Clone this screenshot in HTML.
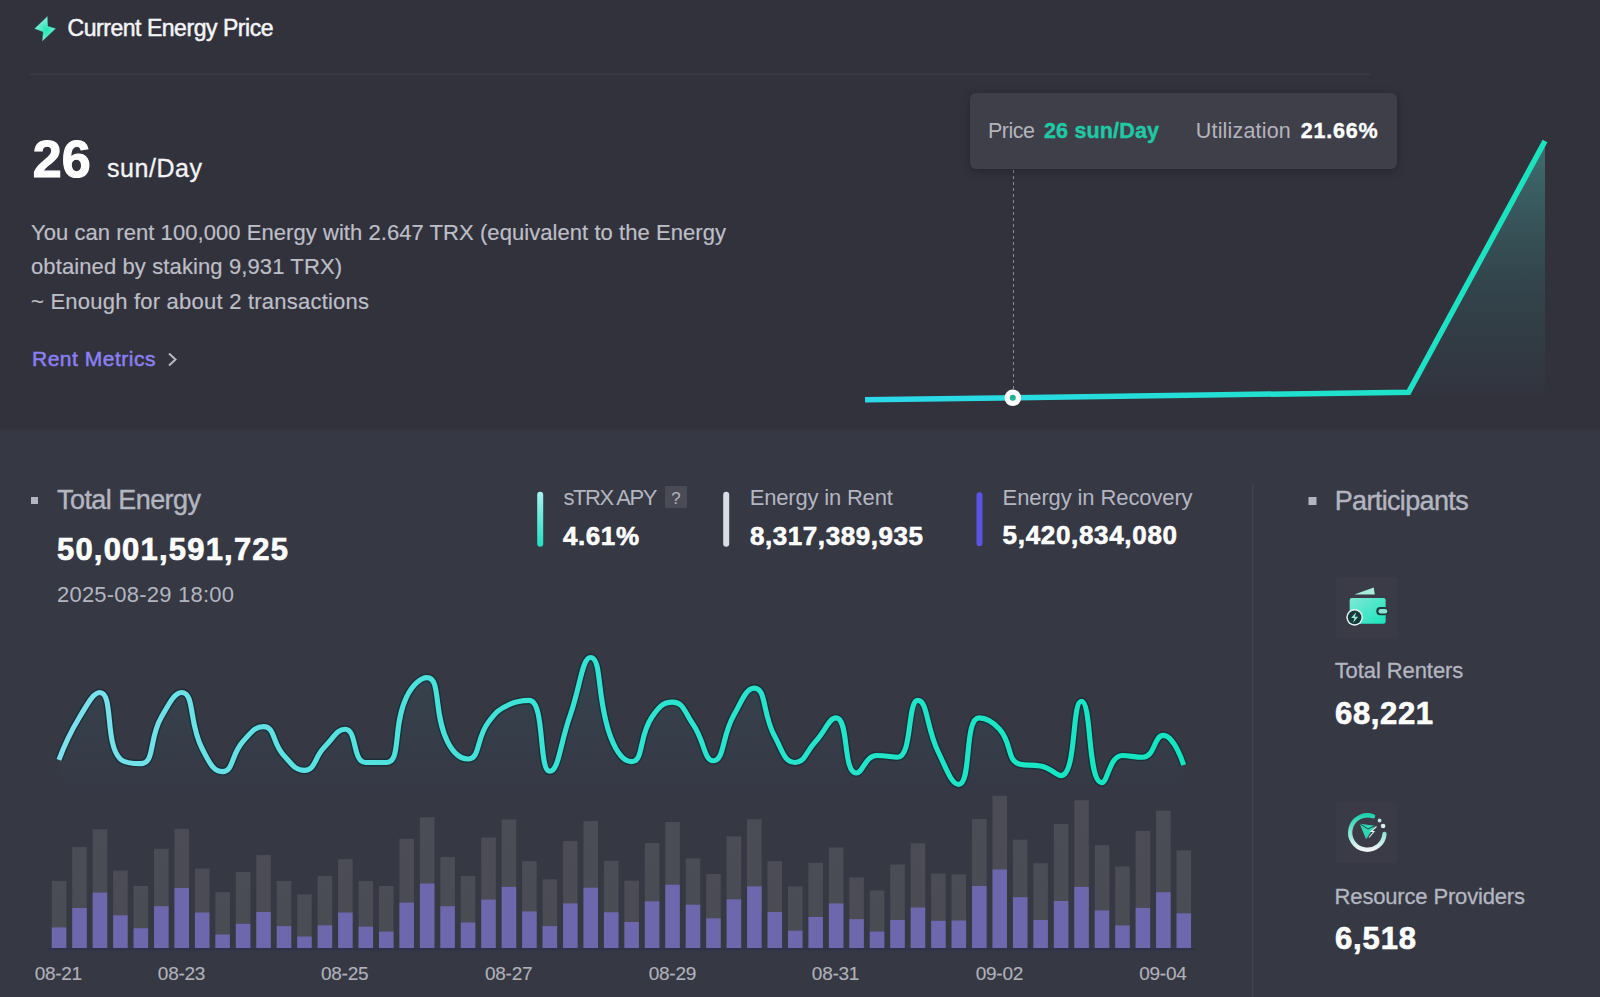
<!DOCTYPE html>
<html><head><meta charset="utf-8">
<style>
html,body{margin:0;padding:0;}
body{width:1600px;height:997px;overflow:hidden;position:relative;background:#363844;font-family:"Liberation Sans",sans-serif;}
.t{position:absolute;white-space:nowrap;}
svg{position:absolute;left:0;top:0;}
</style></head><body>
<div style="position:absolute;left:0;top:0;width:1600px;height:433px;background:linear-gradient(to bottom,#32323d 0px,#32323d 428px,#363844 432px);"></div>
<svg width="1600" height="997" viewBox="0 0 1600 997">
<defs>
<linearGradient id="gg" x1="0" y1="0" x2="0" y2="1"><stop offset="0" stop-color="#4b4c55"/><stop offset="1" stop-color="#4a4b53"/></linearGradient>
<linearGradient id="lg" x1="0" y1="0" x2="1" y2="0"><stop offset="0" stop-color="#7ee0ee"/><stop offset="0.5" stop-color="#2fe3d2"/><stop offset="1" stop-color="#12e6c0"/></linearGradient>
<linearGradient id="ag" x1="0" y1="0" x2="0" y2="1"><stop offset="0" stop-color="#2de0c8" stop-opacity="0.07"/><stop offset="1" stop-color="#2de0c8" stop-opacity="0"/></linearGradient>
<linearGradient id="plg" x1="865" y1="0" x2="1545" y2="0" gradientUnits="userSpaceOnUse"><stop offset="0" stop-color="#2cd9ea"/><stop offset="1" stop-color="#1ae4bf"/></linearGradient>
<linearGradient id="pag" x1="0" y1="142" x2="0" y2="395" gradientUnits="userSpaceOnUse"><stop offset="0" stop-color="#50b8b0" stop-opacity="0.45"/><stop offset="0.55" stop-color="#3a9890" stop-opacity="0.18"/><stop offset="1" stop-color="#2a9080" stop-opacity="0.02"/></linearGradient>
<linearGradient id="bar1" x1="0" y1="0" x2="0" y2="1"><stop offset="0" stop-color="#a6f3f3"/><stop offset="1" stop-color="#1fe0c0"/></linearGradient>
</defs>
<!-- header divider -->
<rect x="30" y="73.5" width="1340" height="1.5" fill="#3b3b47"/>
<!-- header icon -->
<defs><radialGradient id="bg1" cx="0.55" cy="0.55" r="0.6"><stop offset="0" stop-color="#1fe8b6"/><stop offset="1" stop-color="#9ceee0"/></radialGradient></defs><polygon points="47.6,16.1 34.3,28.7 42.9,31.9 42.1,41.6 56,28.5 48,26" fill="url(#bg1)" stroke="#0d3b38" stroke-width="0.6" stroke-opacity="0.6" stroke-linejoin="round"/>
<!-- chevron -->
<polyline points="169,353.5 175.5,359.5 169,365.5" fill="none" stroke="#b7b8c0" stroke-width="2"/>
<!-- price chart -->
<path d="M865,399.8 L1408.6,392.2 L1545,141 L1545,395 L865,400 Z" fill="url(#pag)"/>
<line x1="1013.5" y1="170" x2="1013.5" y2="397" stroke="#8a8a92" stroke-width="1" stroke-dasharray="3,3"/>
<polyline points="865,399.8 1408.6,392.2 1545,141" fill="none" stroke="url(#plg)" stroke-width="5.5" stroke-linejoin="miter"/>
<circle cx="1012.8" cy="397.8" r="8.3" fill="#ffffff"/>
<circle cx="1012.8" cy="397.8" r="3" fill="#1bb58e"/>
<!-- tooltip -->

<!-- bottom -->
<rect x="31" y="497" width="7" height="7" fill="#b3b6c0"/>
<rect x="1308.5" y="497" width="8" height="8" fill="#b3b6c0"/>
<rect x="537.2" y="491.8" width="6" height="55" rx="3" fill="url(#bar1)"/>
<rect x="723.2" y="491.8" width="6" height="55" rx="3" fill="#dcdce6"/>
<rect x="976.5" y="492.3" width="6" height="54" rx="3" fill="#5b52e8"/>
<rect x="665" y="486" width="22" height="22" rx="1" fill="#4a4b55"/>
<text x="676" y="504" font-family="Liberation Sans" font-size="17" fill="#b3b6c0" text-anchor="middle">?</text>
<rect x="1252" y="484" width="1.5" height="513" fill="#41434f"/>
<rect x="1336" y="577" width="62" height="61" rx="4" fill="#3a3b46"/>
<rect x="1335.7" y="802" width="62" height="61" rx="4" fill="#3a3b46"/>
<!-- wallet icon -->
<defs>
<linearGradient id="wg" x1="0" y1="0" x2="1" y2="1"><stop offset="0" stop-color="#7fe9d6"/><stop offset="1" stop-color="#19e3bb"/></linearGradient>
<linearGradient id="rg" x1="0" y1="0" x2="0" y2="1"><stop offset="0" stop-color="#1fd3b0"/><stop offset="1" stop-color="#f0f4f6"/></linearGradient>
</defs>
<g transform="translate(1367.5,607) scale(1.1) translate(-1367.5,-607)"><polygon points="1355.5,595.6 1373.2,589.2 1374.1,595.6" fill="#a6ecd8"/>
<rect x="1351.3" y="598.8" width="32.7" height="23.4" rx="2" fill="url(#wg)"/>
<rect x="1375.5" y="607" width="11" height="7.5" rx="3.7" fill="#1b3b3e"/>
<rect x="1377.5" y="608.8" width="8" height="4" rx="2" fill="#86e4d0"/>
<circle cx="1355.8" cy="616.4" r="7.6" fill="#e8f2f2"/>
<circle cx="1355.8" cy="616.4" r="6.2" fill="#153a3a"/>
<polygon points="1357.3,611.5 1352.6,617 1355.6,617 1354.4,621.3 1359,615.8 1356,615.8" fill="#9ee8d8"/></g>
<!-- providers icon -->
<path d="M1373.1,816.3 A17.2,17.2 0 1 0 1384.5,834" fill="none" stroke="url(#rg)" stroke-width="4.3" stroke-linecap="round"/>
<circle cx="1379.6" cy="820.5" r="1.9" fill="#b8e8e0"/>
<circle cx="1383.1" cy="826" r="2.3" fill="#d8f0ee"/>
<polygon points="1359.7,823.7 1375,825.7 1366.1,839.2" fill="#2fd6b4"/>
<polyline points="1359.7,823.7 1368,829 1375,825.7 M1368,829 1366.1,839.2" fill="none" stroke="#1a4a46" stroke-width="1"/>
<polyline points="1376.5,826.5 1371,831.5 1374,831.5 1369,837.5" fill="none" stroke="#dff4f0" stroke-width="1.1"/>
<!-- line chart -->
<path d="M58.90,759.90 C58.90,759.90 67.22,737.49 79.35,717.50 C87.67,703.79 93.32,692.50 99.80,692.50 C113.77,692.50 104.53,743.73 120.25,759.00 C124.98,763.60 134.70,763.60 140.70,763.60 C155.15,763.60 148.68,739.17 161.15,717.50 C169.13,703.62 174.41,692.50 181.60,692.50 C194.86,692.50 188.57,722.44 202.05,748.50 C209.02,761.99 213.12,771.60 222.50,771.60 C233.57,771.60 230.89,754.77 242.95,741.50 C251.34,732.27 254.88,726.60 263.40,726.60 C275.33,726.60 271.92,742.73 283.85,755.50 C292.37,764.63 295.15,770.40 304.30,770.40 C315.60,770.40 313.77,757.84 324.75,746.80 C334.22,737.29 336.85,729.30 345.20,729.30 C357.30,729.30 352.24,762.50 365.65,762.50 C372.69,762.50 381.40,762.50 386.10,762.50 C401.85,762.50 392.05,727.09 406.55,697.00 C412.50,684.64 420.95,677.60 427.00,677.60 C441.40,677.60 432.86,712.45 447.45,741.50 C453.31,753.15 459.91,759.00 467.90,759.00 C480.36,759.00 475.89,738.82 488.35,722.30 C496.34,711.72 497.29,710.46 508.80,704.80 C517.74,700.40 524.73,700.40 529.25,700.40 C545.18,700.40 538.39,771.30 549.70,771.30 C558.84,771.30 560.07,743.35 570.15,715.30 C580.52,686.45 581.92,657.50 590.60,657.50 C602.37,657.50 596.19,700.17 611.05,738.00 C616.64,752.22 623.55,761.60 631.50,761.60 C644.00,761.60 638.46,736.63 651.95,717.00 C658.91,706.88 663.04,702.10 672.40,702.10 C683.49,702.10 684.35,711.80 692.85,724.00 C704.80,741.15 703.94,760.80 713.30,760.80 C724.39,760.80 721.59,736.91 733.75,715.30 C742.04,700.56 746.14,688.10 754.20,688.10 C766.59,688.10 762.14,713.54 774.65,736.30 C782.59,750.74 784.23,762.50 795.10,762.50 C804.68,762.50 805.65,752.30 815.55,741.50 C826.10,730.00 828.90,717.90 836.00,717.90 C849.35,717.90 842.42,773.00 856.45,773.00 C862.87,773.00 865.30,755.50 876.90,755.50 C885.75,755.50 892.17,757.30 897.35,757.30 C912.62,757.30 907.14,700.40 917.80,700.40 C927.59,700.40 926.15,727.15 938.25,752.00 C946.60,769.15 951.44,784.40 958.70,784.40 C971.89,784.40 963.85,717.90 979.15,717.90 C984.30,717.90 992.11,720.81 999.60,729.30 C1012.56,744.01 1006.47,760.94 1020.05,764.30 C1026.92,766.00 1030.77,764.30 1040.50,766.00 C1051.22,767.87 1056.31,775.60 1060.95,775.60 C1076.76,775.60 1071.61,701.30 1081.40,701.30 C1092.06,701.30 1087.29,782.60 1101.85,782.60 C1107.74,782.60 1109.56,755.50 1122.30,755.50 C1130.01,755.50 1134.44,757.30 1142.75,757.30 C1154.89,757.30 1153.91,735.40 1163.20,735.40 C1174.36,735.40 1183.65,765.00 1183.65,765.00 L1183.65,800 L58.90,800 Z" fill="url(#ag)"/>
<path d="M58.90,759.90 C58.90,759.90 67.22,737.49 79.35,717.50 C87.67,703.79 93.32,692.50 99.80,692.50 C113.77,692.50 104.53,743.73 120.25,759.00 C124.98,763.60 134.70,763.60 140.70,763.60 C155.15,763.60 148.68,739.17 161.15,717.50 C169.13,703.62 174.41,692.50 181.60,692.50 C194.86,692.50 188.57,722.44 202.05,748.50 C209.02,761.99 213.12,771.60 222.50,771.60 C233.57,771.60 230.89,754.77 242.95,741.50 C251.34,732.27 254.88,726.60 263.40,726.60 C275.33,726.60 271.92,742.73 283.85,755.50 C292.37,764.63 295.15,770.40 304.30,770.40 C315.60,770.40 313.77,757.84 324.75,746.80 C334.22,737.29 336.85,729.30 345.20,729.30 C357.30,729.30 352.24,762.50 365.65,762.50 C372.69,762.50 381.40,762.50 386.10,762.50 C401.85,762.50 392.05,727.09 406.55,697.00 C412.50,684.64 420.95,677.60 427.00,677.60 C441.40,677.60 432.86,712.45 447.45,741.50 C453.31,753.15 459.91,759.00 467.90,759.00 C480.36,759.00 475.89,738.82 488.35,722.30 C496.34,711.72 497.29,710.46 508.80,704.80 C517.74,700.40 524.73,700.40 529.25,700.40 C545.18,700.40 538.39,771.30 549.70,771.30 C558.84,771.30 560.07,743.35 570.15,715.30 C580.52,686.45 581.92,657.50 590.60,657.50 C602.37,657.50 596.19,700.17 611.05,738.00 C616.64,752.22 623.55,761.60 631.50,761.60 C644.00,761.60 638.46,736.63 651.95,717.00 C658.91,706.88 663.04,702.10 672.40,702.10 C683.49,702.10 684.35,711.80 692.85,724.00 C704.80,741.15 703.94,760.80 713.30,760.80 C724.39,760.80 721.59,736.91 733.75,715.30 C742.04,700.56 746.14,688.10 754.20,688.10 C766.59,688.10 762.14,713.54 774.65,736.30 C782.59,750.74 784.23,762.50 795.10,762.50 C804.68,762.50 805.65,752.30 815.55,741.50 C826.10,730.00 828.90,717.90 836.00,717.90 C849.35,717.90 842.42,773.00 856.45,773.00 C862.87,773.00 865.30,755.50 876.90,755.50 C885.75,755.50 892.17,757.30 897.35,757.30 C912.62,757.30 907.14,700.40 917.80,700.40 C927.59,700.40 926.15,727.15 938.25,752.00 C946.60,769.15 951.44,784.40 958.70,784.40 C971.89,784.40 963.85,717.90 979.15,717.90 C984.30,717.90 992.11,720.81 999.60,729.30 C1012.56,744.01 1006.47,760.94 1020.05,764.30 C1026.92,766.00 1030.77,764.30 1040.50,766.00 C1051.22,767.87 1056.31,775.60 1060.95,775.60 C1076.76,775.60 1071.61,701.30 1081.40,701.30 C1092.06,701.30 1087.29,782.60 1101.85,782.60 C1107.74,782.60 1109.56,755.50 1122.30,755.50 C1130.01,755.50 1134.44,757.30 1142.75,757.30 C1154.89,757.30 1153.91,735.40 1163.20,735.40 C1174.36,735.40 1183.65,765.00 1183.65,765.00" fill="none" stroke="#0a2a32" stroke-opacity="0.6" stroke-width="8" stroke-linejoin="round"/>
<path d="M58.90,759.90 C58.90,759.90 67.22,737.49 79.35,717.50 C87.67,703.79 93.32,692.50 99.80,692.50 C113.77,692.50 104.53,743.73 120.25,759.00 C124.98,763.60 134.70,763.60 140.70,763.60 C155.15,763.60 148.68,739.17 161.15,717.50 C169.13,703.62 174.41,692.50 181.60,692.50 C194.86,692.50 188.57,722.44 202.05,748.50 C209.02,761.99 213.12,771.60 222.50,771.60 C233.57,771.60 230.89,754.77 242.95,741.50 C251.34,732.27 254.88,726.60 263.40,726.60 C275.33,726.60 271.92,742.73 283.85,755.50 C292.37,764.63 295.15,770.40 304.30,770.40 C315.60,770.40 313.77,757.84 324.75,746.80 C334.22,737.29 336.85,729.30 345.20,729.30 C357.30,729.30 352.24,762.50 365.65,762.50 C372.69,762.50 381.40,762.50 386.10,762.50 C401.85,762.50 392.05,727.09 406.55,697.00 C412.50,684.64 420.95,677.60 427.00,677.60 C441.40,677.60 432.86,712.45 447.45,741.50 C453.31,753.15 459.91,759.00 467.90,759.00 C480.36,759.00 475.89,738.82 488.35,722.30 C496.34,711.72 497.29,710.46 508.80,704.80 C517.74,700.40 524.73,700.40 529.25,700.40 C545.18,700.40 538.39,771.30 549.70,771.30 C558.84,771.30 560.07,743.35 570.15,715.30 C580.52,686.45 581.92,657.50 590.60,657.50 C602.37,657.50 596.19,700.17 611.05,738.00 C616.64,752.22 623.55,761.60 631.50,761.60 C644.00,761.60 638.46,736.63 651.95,717.00 C658.91,706.88 663.04,702.10 672.40,702.10 C683.49,702.10 684.35,711.80 692.85,724.00 C704.80,741.15 703.94,760.80 713.30,760.80 C724.39,760.80 721.59,736.91 733.75,715.30 C742.04,700.56 746.14,688.10 754.20,688.10 C766.59,688.10 762.14,713.54 774.65,736.30 C782.59,750.74 784.23,762.50 795.10,762.50 C804.68,762.50 805.65,752.30 815.55,741.50 C826.10,730.00 828.90,717.90 836.00,717.90 C849.35,717.90 842.42,773.00 856.45,773.00 C862.87,773.00 865.30,755.50 876.90,755.50 C885.75,755.50 892.17,757.30 897.35,757.30 C912.62,757.30 907.14,700.40 917.80,700.40 C927.59,700.40 926.15,727.15 938.25,752.00 C946.60,769.15 951.44,784.40 958.70,784.40 C971.89,784.40 963.85,717.90 979.15,717.90 C984.30,717.90 992.11,720.81 999.60,729.30 C1012.56,744.01 1006.47,760.94 1020.05,764.30 C1026.92,766.00 1030.77,764.30 1040.50,766.00 C1051.22,767.87 1056.31,775.60 1060.95,775.60 C1076.76,775.60 1071.61,701.30 1081.40,701.30 C1092.06,701.30 1087.29,782.60 1101.85,782.60 C1107.74,782.60 1109.56,755.50 1122.30,755.50 C1130.01,755.50 1134.44,757.30 1142.75,757.30 C1154.89,757.30 1153.91,735.40 1163.20,735.40 C1174.36,735.40 1183.65,765.00 1183.65,765.00" fill="none" stroke="url(#lg)" stroke-width="5.1" stroke-linecap="butt"/>
<rect x="51.80" y="881.0" width="14.5" height="67.0" fill="url(#gg)"/>
<rect x="51.80" y="927.4" width="14.5" height="20.6" fill="#6d67ad"/>
<rect x="72.25" y="847.1" width="14.5" height="100.9" fill="url(#gg)"/>
<rect x="72.25" y="908.0" width="14.5" height="40.0" fill="#6d67ad"/>
<rect x="92.70" y="829.4" width="14.5" height="118.6" fill="url(#gg)"/>
<rect x="92.70" y="892.6" width="14.5" height="55.4" fill="#6d67ad"/>
<rect x="113.15" y="870.6" width="14.5" height="77.4" fill="url(#gg)"/>
<rect x="113.15" y="915.3" width="14.5" height="32.7" fill="#6d67ad"/>
<rect x="133.60" y="886.0" width="14.5" height="62.0" fill="url(#gg)"/>
<rect x="133.60" y="928.2" width="14.5" height="19.8" fill="#6d67ad"/>
<rect x="154.05" y="848.8" width="14.5" height="99.2" fill="url(#gg)"/>
<rect x="154.05" y="906.2" width="14.5" height="41.8" fill="#6d67ad"/>
<rect x="174.50" y="828.9" width="14.5" height="119.1" fill="url(#gg)"/>
<rect x="174.50" y="888.0" width="14.5" height="60.0" fill="#6d67ad"/>
<rect x="194.95" y="868.6" width="14.5" height="79.4" fill="url(#gg)"/>
<rect x="194.95" y="912.5" width="14.5" height="35.5" fill="#6d67ad"/>
<rect x="215.40" y="892.2" width="14.5" height="55.8" fill="url(#gg)"/>
<rect x="215.40" y="934.5" width="14.5" height="13.5" fill="#6d67ad"/>
<rect x="235.85" y="872.0" width="14.5" height="76.0" fill="url(#gg)"/>
<rect x="235.85" y="923.8" width="14.5" height="24.2" fill="#6d67ad"/>
<rect x="256.30" y="855.0" width="14.5" height="93.0" fill="url(#gg)"/>
<rect x="256.30" y="912.0" width="14.5" height="36.0" fill="#6d67ad"/>
<rect x="276.75" y="881.0" width="14.5" height="67.0" fill="url(#gg)"/>
<rect x="276.75" y="926.1" width="14.5" height="21.9" fill="#6d67ad"/>
<rect x="297.20" y="894.3" width="14.5" height="53.7" fill="url(#gg)"/>
<rect x="297.20" y="936.5" width="14.5" height="11.5" fill="#6d67ad"/>
<rect x="317.65" y="876.1" width="14.5" height="71.9" fill="url(#gg)"/>
<rect x="317.65" y="925.3" width="14.5" height="22.7" fill="#6d67ad"/>
<rect x="338.10" y="859.2" width="14.5" height="88.8" fill="url(#gg)"/>
<rect x="338.10" y="912.5" width="14.5" height="35.5" fill="#6d67ad"/>
<rect x="358.55" y="881.0" width="14.5" height="67.0" fill="url(#gg)"/>
<rect x="358.55" y="926.6" width="14.5" height="21.4" fill="#6d67ad"/>
<rect x="379.00" y="886.0" width="14.5" height="62.0" fill="url(#gg)"/>
<rect x="379.00" y="931.6" width="14.5" height="16.4" fill="#6d67ad"/>
<rect x="399.45" y="838.8" width="14.5" height="109.2" fill="url(#gg)"/>
<rect x="399.45" y="902.6" width="14.5" height="45.4" fill="#6d67ad"/>
<rect x="419.90" y="817.3" width="14.5" height="130.7" fill="url(#gg)"/>
<rect x="419.90" y="883.5" width="14.5" height="64.5" fill="#6d67ad"/>
<rect x="440.35" y="857.0" width="14.5" height="91.0" fill="url(#gg)"/>
<rect x="440.35" y="906.2" width="14.5" height="41.8" fill="#6d67ad"/>
<rect x="460.80" y="876.1" width="14.5" height="71.9" fill="url(#gg)"/>
<rect x="460.80" y="922.5" width="14.5" height="25.5" fill="#6d67ad"/>
<rect x="481.25" y="837.5" width="14.5" height="110.5" fill="url(#gg)"/>
<rect x="481.25" y="899.6" width="14.5" height="48.4" fill="#6d67ad"/>
<rect x="501.70" y="819.5" width="14.5" height="128.5" fill="url(#gg)"/>
<rect x="501.70" y="886.9" width="14.5" height="61.1" fill="#6d67ad"/>
<rect x="522.15" y="861.2" width="14.5" height="86.8" fill="url(#gg)"/>
<rect x="522.15" y="911.4" width="14.5" height="36.6" fill="#6d67ad"/>
<rect x="542.60" y="879.4" width="14.5" height="68.6" fill="url(#gg)"/>
<rect x="542.60" y="926.1" width="14.5" height="21.9" fill="#6d67ad"/>
<rect x="563.05" y="841.0" width="14.5" height="107.0" fill="url(#gg)"/>
<rect x="563.05" y="903.4" width="14.5" height="44.6" fill="#6d67ad"/>
<rect x="583.50" y="821.1" width="14.5" height="126.9" fill="url(#gg)"/>
<rect x="583.50" y="887.7" width="14.5" height="60.3" fill="#6d67ad"/>
<rect x="603.95" y="860.9" width="14.5" height="87.1" fill="url(#gg)"/>
<rect x="603.95" y="912.2" width="14.5" height="35.8" fill="#6d67ad"/>
<rect x="624.40" y="880.7" width="14.5" height="67.3" fill="url(#gg)"/>
<rect x="624.40" y="922.0" width="14.5" height="26.0" fill="#6d67ad"/>
<rect x="644.85" y="843.0" width="14.5" height="105.0" fill="url(#gg)"/>
<rect x="644.85" y="901.3" width="14.5" height="46.7" fill="#6d67ad"/>
<rect x="665.30" y="822.0" width="14.5" height="126.0" fill="url(#gg)"/>
<rect x="665.30" y="884.7" width="14.5" height="63.3" fill="#6d67ad"/>
<rect x="685.75" y="858.4" width="14.5" height="89.6" fill="url(#gg)"/>
<rect x="685.75" y="904.7" width="14.5" height="43.3" fill="#6d67ad"/>
<rect x="706.20" y="874.1" width="14.5" height="73.9" fill="url(#gg)"/>
<rect x="706.20" y="918.3" width="14.5" height="29.7" fill="#6d67ad"/>
<rect x="726.65" y="836.4" width="14.5" height="111.6" fill="url(#gg)"/>
<rect x="726.65" y="899.3" width="14.5" height="48.7" fill="#6d67ad"/>
<rect x="747.10" y="819.3" width="14.5" height="128.7" fill="url(#gg)"/>
<rect x="747.10" y="886.4" width="14.5" height="61.6" fill="#6d67ad"/>
<rect x="767.55" y="861.2" width="14.5" height="86.8" fill="url(#gg)"/>
<rect x="767.55" y="912.0" width="14.5" height="36.0" fill="#6d67ad"/>
<rect x="788.00" y="886.4" width="14.5" height="61.6" fill="url(#gg)"/>
<rect x="788.00" y="930.7" width="14.5" height="17.3" fill="#6d67ad"/>
<rect x="808.45" y="862.8" width="14.5" height="85.2" fill="url(#gg)"/>
<rect x="808.45" y="917.0" width="14.5" height="31.0" fill="#6d67ad"/>
<rect x="828.90" y="847.5" width="14.5" height="100.5" fill="url(#gg)"/>
<rect x="828.90" y="903.4" width="14.5" height="44.6" fill="#6d67ad"/>
<rect x="849.35" y="877.4" width="14.5" height="70.6" fill="url(#gg)"/>
<rect x="849.35" y="919.1" width="14.5" height="28.9" fill="#6d67ad"/>
<rect x="869.80" y="890.5" width="14.5" height="57.5" fill="url(#gg)"/>
<rect x="869.80" y="931.6" width="14.5" height="16.4" fill="#6d67ad"/>
<rect x="890.25" y="864.5" width="14.5" height="83.5" fill="url(#gg)"/>
<rect x="890.25" y="920.0" width="14.5" height="28.0" fill="#6d67ad"/>
<rect x="910.70" y="843.3" width="14.5" height="104.7" fill="url(#gg)"/>
<rect x="910.70" y="907.5" width="14.5" height="40.5" fill="#6d67ad"/>
<rect x="931.15" y="873.6" width="14.5" height="74.4" fill="url(#gg)"/>
<rect x="931.15" y="920.8" width="14.5" height="27.2" fill="#6d67ad"/>
<rect x="951.60" y="874.4" width="14.5" height="73.6" fill="url(#gg)"/>
<rect x="951.60" y="920.5" width="14.5" height="27.5" fill="#6d67ad"/>
<rect x="972.05" y="819.0" width="14.5" height="129.0" fill="url(#gg)"/>
<rect x="972.05" y="886.0" width="14.5" height="62.0" fill="#6d67ad"/>
<rect x="992.50" y="795.8" width="14.5" height="152.2" fill="url(#gg)"/>
<rect x="992.50" y="869.5" width="14.5" height="78.5" fill="#6d67ad"/>
<rect x="1012.95" y="839.7" width="14.5" height="108.3" fill="url(#gg)"/>
<rect x="1012.95" y="897.2" width="14.5" height="50.8" fill="#6d67ad"/>
<rect x="1033.40" y="863.3" width="14.5" height="84.7" fill="url(#gg)"/>
<rect x="1033.40" y="920.0" width="14.5" height="28.0" fill="#6d67ad"/>
<rect x="1053.85" y="824.0" width="14.5" height="124.0" fill="url(#gg)"/>
<rect x="1053.85" y="901.0" width="14.5" height="47.0" fill="#6d67ad"/>
<rect x="1074.30" y="800.3" width="14.5" height="147.7" fill="url(#gg)"/>
<rect x="1074.30" y="886.9" width="14.5" height="61.1" fill="#6d67ad"/>
<rect x="1094.75" y="845.1" width="14.5" height="102.9" fill="url(#gg)"/>
<rect x="1094.75" y="910.5" width="14.5" height="37.5" fill="#6d67ad"/>
<rect x="1115.20" y="866.5" width="14.5" height="81.5" fill="url(#gg)"/>
<rect x="1115.20" y="925.4" width="14.5" height="22.6" fill="#6d67ad"/>
<rect x="1135.65" y="831.0" width="14.5" height="117.0" fill="url(#gg)"/>
<rect x="1135.65" y="907.9" width="14.5" height="40.1" fill="#6d67ad"/>
<rect x="1156.10" y="810.7" width="14.5" height="137.3" fill="url(#gg)"/>
<rect x="1156.10" y="892.2" width="14.5" height="55.8" fill="#6d67ad"/>
<rect x="1176.55" y="850.4" width="14.5" height="97.6" fill="url(#gg)"/>
<rect x="1176.55" y="913.3" width="14.5" height="34.7" fill="#6d67ad"/>
<rect x="48" y="948" width="1147" height="2.5" fill="#2f3248"/>
</svg>
<div style="position:absolute;left:969.5px;top:93.3px;width:427px;height:76px;border-radius:6px;background:#3f3f4a;box-shadow:0 2px 10px rgba(0,0,0,0.28);"></div>
<div class="t" style="left:67.50px;top:16.83px;font-size:23px;line-height:23px;color:#f4f4f6;letter-spacing:-0.461px;-webkit-text-stroke:0.5px #f4f4f6;">Current Energy Price</div>
<div class="t" style="left:32.70px;top:132.88px;font-size:52px;line-height:52px;color:#ffffff;letter-spacing:0.158px;font-weight:700;-webkit-text-stroke:1.2px #ffffff;">26</div>
<div class="t" style="left:107.00px;top:155.54px;font-size:25px;line-height:25px;color:#f4f4f6;letter-spacing:0.548px;-webkit-text-stroke:0.3px #f4f4f6;">sun/Day</div>
<div class="t" style="left:31.00px;top:222.08px;font-size:22px;line-height:22px;color:#bdbec6;letter-spacing:0.059px;-webkit-text-stroke:0.2px #bdbec6;">You can rent 100,000 Energy with 2.647 TRX (equivalent to the Energy</div>
<div class="t" style="left:31.00px;top:256.18px;font-size:22px;line-height:22px;color:#bdbec6;letter-spacing:0.111px;-webkit-text-stroke:0.2px #bdbec6;">obtained by staking 9,931 TRX)</div>
<div class="t" style="left:31.00px;top:291.08px;font-size:22px;line-height:22px;color:#bdbec6;letter-spacing:0.224px;-webkit-text-stroke:0.2px #bdbec6;">~ Enough for about 2 transactions</div>
<div class="t" style="left:32.00px;top:348.22px;font-size:21px;line-height:21px;color:#8b80f2;letter-spacing:0.513px;-webkit-text-stroke:0.5px #8b80f2;">Rent Metrics</div>
<div class="t" style="left:988.00px;top:121.10px;font-size:21.5px;line-height:21.5px;color:#b4b4bc;letter-spacing:-0.497px;">Price</div>
<div class="t" style="left:1044.00px;top:121.10px;font-size:21.5px;line-height:21.5px;color:#1fc9a5;letter-spacing:0.164px;font-weight:700;-webkit-text-stroke:0.4px #1fc9a5;">26 sun/Day</div>
<div class="t" style="left:1195.80px;top:121.10px;font-size:21.5px;line-height:21.5px;color:#b4b4bc;letter-spacing:0.180px;">Utilization</div>
<div class="t" style="left:1300.70px;top:121.10px;font-size:21.5px;line-height:21.5px;color:#ffffff;letter-spacing:0.816px;font-weight:700;-webkit-text-stroke:0.4px #ffffff;">21.66%</div>
<div class="t" style="left:57.00px;top:487.14px;font-size:27px;line-height:27px;color:#b3b6c0;letter-spacing:-0.553px;-webkit-text-stroke:0.4px #b3b6c0;">Total Energy</div>
<div class="t" style="left:57.00px;top:533.76px;font-size:31px;line-height:31px;color:#ffffff;letter-spacing:1.193px;font-weight:700;-webkit-text-stroke:0.7px #ffffff;">50,001,591,725</div>
<div class="t" style="left:57.00px;top:583.68px;font-size:22px;line-height:22px;color:#b3b6c0;letter-spacing:0.220px;">2025-08-29 18:00</div>
<div class="t" style="left:563.50px;top:486.98px;font-size:22px;line-height:22px;color:#b3b6c0;letter-spacing:-1.418px;">sTRX APY</div>
<div class="t" style="left:563.00px;top:522.59px;font-size:26px;line-height:26px;color:#ffffff;letter-spacing:0.569px;font-weight:700;-webkit-text-stroke:0.6px #ffffff;">4.61%</div>
<div class="t" style="left:749.80px;top:486.88px;font-size:22px;line-height:22px;color:#b3b6c0;letter-spacing:-0.194px;">Energy in Rent</div>
<div class="t" style="left:750.00px;top:522.59px;font-size:26px;line-height:26px;color:#ffffff;letter-spacing:0.560px;font-weight:700;-webkit-text-stroke:0.6px #ffffff;">8,317,389,935</div>
<div class="t" style="left:1002.60px;top:487.18px;font-size:22px;line-height:22px;color:#b3b6c0;letter-spacing:-0.116px;">Energy in Recovery</div>
<div class="t" style="left:1002.60px;top:522.29px;font-size:26px;line-height:26px;color:#ffffff;letter-spacing:0.677px;font-weight:700;-webkit-text-stroke:0.6px #ffffff;">5,420,834,080</div>
<div class="t" style="left:1334.70px;top:487.94px;font-size:27px;line-height:27px;color:#b3b6c0;letter-spacing:-0.643px;-webkit-text-stroke:0.4px #b3b6c0;">Participants</div>
<div class="t" style="left:1334.70px;top:660.38px;font-size:22px;line-height:22px;color:#b3b6c0;letter-spacing:-0.085px;-webkit-text-stroke:0.3px #b3b6c0;">Total Renters</div>
<div class="t" style="left:1335.00px;top:698.36px;font-size:31px;line-height:31px;color:#ffffff;letter-spacing:0.636px;font-weight:700;-webkit-text-stroke:0.7px #ffffff;">68,221</div>
<div class="t" style="left:1334.60px;top:886.38px;font-size:22px;line-height:22px;color:#b3b6c0;letter-spacing:-0.164px;-webkit-text-stroke:0.3px #b3b6c0;">Resource Providers</div>
<div class="t" style="left:1335.00px;top:923.46px;font-size:31px;line-height:31px;color:#ffffff;letter-spacing:0.856px;font-weight:700;-webkit-text-stroke:0.7px #ffffff;">6,518</div>
<div class="t" style="left:34.65px;top:964.22px;font-size:19px;line-height:19px;color:#b0b1b9;letter-spacing:-0.274px;-webkit-text-stroke:0.15px #b0b1b9;">08-21</div>
<div class="t" style="left:157.85px;top:964.22px;font-size:19px;line-height:19px;color:#b0b1b9;letter-spacing:-0.274px;-webkit-text-stroke:0.15px #b0b1b9;">08-23</div>
<div class="t" style="left:321.00px;top:964.22px;font-size:19px;line-height:19px;color:#b0b1b9;letter-spacing:-0.274px;-webkit-text-stroke:0.15px #b0b1b9;">08-25</div>
<div class="t" style="left:485.00px;top:964.22px;font-size:19px;line-height:19px;color:#b0b1b9;letter-spacing:-0.274px;-webkit-text-stroke:0.15px #b0b1b9;">08-27</div>
<div class="t" style="left:648.75px;top:964.22px;font-size:19px;line-height:19px;color:#b0b1b9;letter-spacing:-0.274px;-webkit-text-stroke:0.15px #b0b1b9;">08-29</div>
<div class="t" style="left:811.85px;top:964.22px;font-size:19px;line-height:19px;color:#b0b1b9;letter-spacing:-0.274px;-webkit-text-stroke:0.15px #b0b1b9;">08-31</div>
<div class="t" style="left:975.75px;top:964.22px;font-size:19px;line-height:19px;color:#b0b1b9;letter-spacing:-0.274px;-webkit-text-stroke:0.15px #b0b1b9;">09-02</div>
<div class="t" style="left:1139.25px;top:964.22px;font-size:19px;line-height:19px;color:#b0b1b9;letter-spacing:-0.274px;-webkit-text-stroke:0.15px #b0b1b9;">09-04</div>

</body></html>
